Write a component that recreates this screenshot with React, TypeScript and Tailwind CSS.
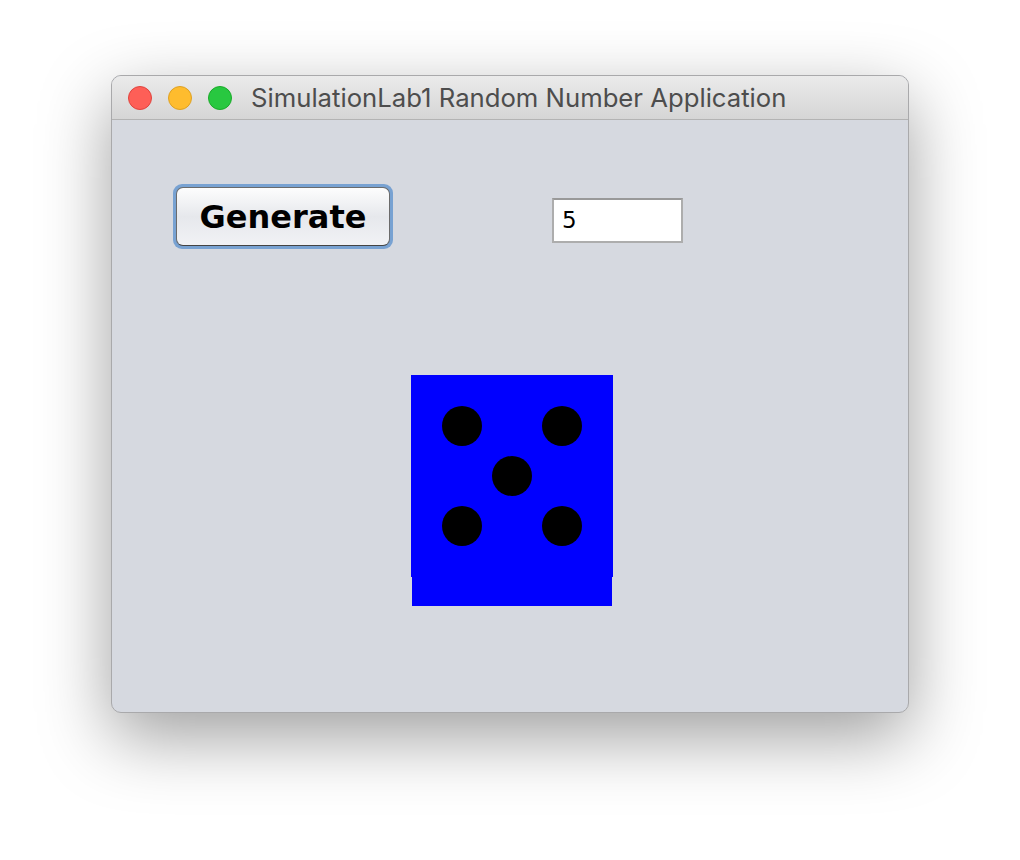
const pips = [
  [51, 51],
  [151, 51],
  [101, 101],
  [51, 151],
  [151, 151],
];

const Die = () => (
  <div className="flex flex-col items-start">
    <svg width="202" height="202" viewBox="0 0 202 202" className="block">
      <rect width="202" height="202" fill="#0000ff" />
      {pips.map(([cx, cy], i) => (
        <circle key={i} cx={cx} cy={cy} r="20" fill="#000" />
      ))}
    </svg>
    <div className="ml-px h-[29px] w-[200px] bg-[#0000ff]" />
  </div>
);

export default function App() {
  return (
    <div className="min-h-[860px] w-[1020px] bg-white pl-[111px] pt-[75px]">
      <div className="flex h-[638px] w-[798px] flex-col overflow-hidden rounded-[10px] border border-[#a9a9ab] bg-[#d6d9e0] shadow-[0_24px_70px_rgba(0,0,0,0.38)]">
        {/* title bar */}
        <div className="flex h-[44px] shrink-0 items-center border-b border-[#b3b3b3] bg-gradient-to-b from-[#ebebeb] to-[#d5d5d5] pl-[16px]">
          <div className="flex gap-4">
            <span className="h-6 w-6 rounded-full border border-[#e0443e] bg-[#fe5f57]" />
            <span className="h-6 w-6 rounded-full border border-[#dea123] bg-[#febc2e]" />
            <span className="h-6 w-6 rounded-full border border-[#1aab29] bg-[#28c840]" />
          </div>
          <span className="ml-[19px] font-['Inter',sans-serif] text-[25.7px] leading-none text-[#4d4d4d]">
            SimulationLab1 Random Number Application
          </span>
        </div>

        {/* content */}
        <div className="flex flex-1 flex-col">
          <div className="flex items-start pl-[61px] pt-[64px]">
            <div className="rounded-[9px] bg-[#78a2d2] p-[3px]">
              <button className="flex h-[59px] w-[214px] items-center justify-center rounded-[7px] border border-[#6b6b6b] border-b-[#444] bg-gradient-to-b from-[#fdfdfd] via-[#e6e8ec] to-[#f1f2f5] font-['DejaVu_Sans',sans-serif] text-[32px] font-bold leading-none text-black">
                Generate
              </button>
            </div>
            <div className="ml-[159px] mt-[14px] flex h-[45px] w-[131px] items-center border-2 border-[#adadad] border-t-[#999] bg-white pl-2 font-['DejaVu_Sans',sans-serif] text-[23px] text-black">
              5
            </div>
          </div>
          <div className="pl-[299px] pt-[126px]">
            <Die />
          </div>
        </div>
      </div>
    </div>
  );
}
